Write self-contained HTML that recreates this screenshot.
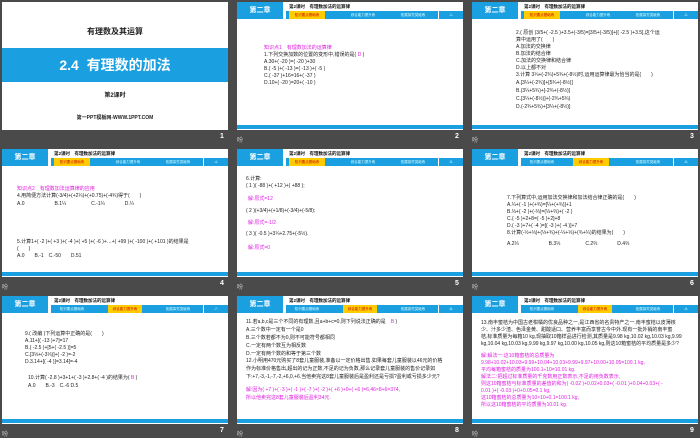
<!DOCTYPE html>
<html><head><meta charset="utf-8"><style>
*{margin:0;padding:0;box-sizing:border-box}
body{width:700px;height:438px;background:#4a4a4a;position:relative;overflow:hidden;font-family:"Liberation Sans","Noto Sans CJK SC",sans-serif;color:#222}
.s{position:absolute;width:226px;height:128px;background:#fff;overflow:hidden}
.hb{position:absolute;left:0;top:0;width:46px;height:17px;background:#1a9fe0;color:#fff;font-size:7px;font-weight:bold;text-align:center;line-height:17px}
.ht{position:absolute;left:52px;top:2px;font-size:4.5px;font-weight:bold;color:#111;white-space:nowrap}
.tb{position:absolute;left:49px;top:9px;width:177px;height:8px;background:#1a9fe0}
.tab{position:absolute;top:0;height:8px;font-size:3.5px;color:#dff;line-height:8px;text-align:center}
.y{background:#ffcc00;color:#c00}
.sep{position:absolute;top:0;width:1px;height:8px;background:#fff}
.bb{position:absolute;left:0;top:123px;width:226px;height:4px;background:#1a9fe0}
.t{position:absolute;font-size:5px;line-height:7px;white-space:nowrap;color:#222}
.m{color:#e020e0}
.n{position:absolute;color:#fff;font-size:7px;font-weight:bold}
.z{position:absolute;color:#ccc;font-size:6px}
</style></head><body>

<!-- slide 1 -->
<div class="s" style="left:2px;top:2px">
<div style="position:absolute;top:24px;width:100%;text-align:center;font-size:8px;font-weight:bold;color:#222">有理数及其运算</div>
<div style="position:absolute;top:46px;width:100%;height:34px;background:#1a9fe0;color:#fff;font-size:14px;font-weight:bold;text-align:center;line-height:34px">2.4&nbsp; 有理数的加法</div>
<div style="position:absolute;top:88px;width:100%;text-align:center;font-size:6px;font-weight:bold">第2课时</div>
<div style="position:absolute;top:112px;width:100%;text-align:center;font-size:5px;font-weight:bold">第一PPT模板网-WWW.1PPT.COM</div>
</div>

<!-- generic header -->
<div class="s" style="left:237px;top:2px">
<div class="hb">第二章</div><div class="ht">第2课时　有理数加法的运算律</div>
<div class="tb"><div class="tab y" style="left:3px;width:36px">知识要点基础练</div><div class="tab" style="left:52px;width:50px">综合能力提升练</div><div class="tab" style="left:102px;width:50px">拓展探究突破练</div><div class="sep" style="left:152px"></div><div class="tab" style="left:153px;width:24px">-1-</div></div>
<div class="t m" style="left:27px;top:43px">知识点1　有理数加法的运算律</div>
<div class="t" style="left:27px;top:50px">1.下列交换加数的位置的变形中,错误的是( <span class="m">D</span> )</div>
<div class="t" style="left:27px;top:57px">A.30+( -20 )=( -20 )+30</div>
<div class="t" style="left:27px;top:64px">B.( -5 )+( -13 )=( -13 )+( -5 )</div>
<div class="t" style="left:27px;top:71px">C.( -37 )+16=16+( -37 )</div>
<div class="t" style="left:27px;top:78px">D.10+( -20 )=20+( -10 )</div>
<div class="bb"></div></div>

<div class="s" style="left:472px;top:2px">
<div class="hb">第二章</div><div class="ht">第2课时　有理数加法的运算律</div>
<div class="tb"><div class="tab y" style="left:3px;width:36px">知识要点基础练</div><div class="tab" style="left:52px;width:50px">综合能力提升练</div><div class="tab" style="left:102px;width:50px">拓展探究突破练</div><div class="sep" style="left:152px"></div><div class="tab" style="left:153px;width:24px">-2-</div></div>
<div class="t" style="left:44px;top:28px">2.( 原创 )3/5+( -2.5 )+3.5+(-3/5)=[3/5+(-3/5)]+[( -2.5 )+3.5],这个运</div>
<div class="t" style="left:44px;top:35px">算中运用了(　　)</div>
<div class="t" style="left:44px;top:42px">A.加法的交换律</div>
<div class="t" style="left:44px;top:49px">B.加法的结合律</div>
<div class="t" style="left:44px;top:56px">C.加法的交换律和结合律</div>
<div class="t" style="left:44px;top:63px">D.以上都不对</div>
<div class="t" style="left:44px;top:70px">3.计算 3¼+(-2¾)+5¾+(-8½)时,运用运算律最为恰当的是(　　)</div>
<div class="t" style="left:44px;top:78px">A.[3¼+(-2¾)]+[5¾+(-8½)]</div>
<div class="t" style="left:44px;top:86px">B.(3¼+5¾)+[-2¾+(-8½)]</div>
<div class="t" style="left:44px;top:94px">C.[3¼+(-8½)]+(-2¾+5¾)</div>
<div class="t" style="left:44px;top:102px">D.(-2¾+5¾)+[3¼+(-8½)]</div>
<div class="bb"></div></div>

<!-- row 2 -->
<div class="s" style="left:2px;top:149px">
<div class="hb">第二章</div><div class="ht">第2课时　有理数加法的运算律</div>
<div class="tb"><div class="tab y" style="left:3px;width:36px">知识要点基础练</div><div class="tab" style="left:52px;width:50px">综合能力提升练</div><div class="tab" style="left:102px;width:50px">拓展探究突破练</div><div class="sep" style="left:152px"></div><div class="tab" style="left:153px;width:24px">-4-</div></div>
<div class="t m" style="left:15px;top:37px">知识点2　有理数加法运算律的应用</div>
<div class="t" style="left:15px;top:44px">4.用简便方法计算(-3/4)+(+2¼)+(+0.75)+(-4¾)得于(　　)</div>
<div class="t" style="left:15px;top:52px">A.0　　　　　　B.1¼　　　　　C.-1¼　　　　D.¼</div>
<div class="t" style="left:15px;top:90px">5.计算1+( -2 )+( +3 )+( -4 )+( +5 )+( -6 )+…+( +99 )+( -100 )+( +101 )的结果是</div>
<div class="t" style="left:15px;top:97px">(　　)</div>
<div class="t" style="left:15px;top:104px">A.0　　B.-1　C.-50　　D.51</div>
<div class="bb"></div></div>

<div class="s" style="left:237px;top:149px">
<div class="hb">第二章</div><div class="ht">第2课时　有理数加法的运算律</div>
<div class="tb"><div class="tab y" style="left:3px;width:36px">知识要点基础练</div><div class="tab" style="left:52px;width:50px">综合能力提升练</div><div class="tab" style="left:102px;width:50px">拓展探究突破练</div><div class="sep" style="left:152px"></div><div class="tab" style="left:153px;width:24px">-5-</div></div>
<div class="t" style="left:9px;top:27px">6.计算:</div>
<div class="t" style="left:9px;top:34px">( 1 )( -88 )+( +12 )+( +88 );</div>
<div class="t m" style="left:11px;top:47px">解:原式=12</div>
<div class="t" style="left:9px;top:59px">( 2 )(+3/4)+(+1/8)+(-3/4)+(-5/8);</div>
<div class="t m" style="left:11px;top:71px">解:原式=-1/2</div>
<div class="t" style="left:9px;top:82px">( 3 )( -0.5 )+3¼+2.75+(-5½).</div>
<div class="t m" style="left:11px;top:96px">解:原式=0</div>
<div class="bb"></div></div>

<div class="s" style="left:472px;top:149px">
<div class="hb">第二章</div><div class="ht">第2课时　有理数加法的运算律</div>
<div class="tb"><div class="tab" style="left:3px;width:36px">知识要点基础练</div><div class="tab y" style="left:52px;width:36px">综合能力提升练</div><div class="tab" style="left:102px;width:50px">拓展探究突破练</div><div class="sep" style="left:152px"></div><div class="tab" style="left:153px;width:24px">-6-</div></div>
<div class="t" style="left:35px;top:46px">7.下列算式中,运用加法交换律和加法结合律正确的是(　　)</div>
<div class="t" style="left:35px;top:53px">A.¼+( -1 )+(+¾)=[¼+(+¾)]+1</div>
<div class="t" style="left:35px;top:60px">B.⅓+( -2 )+(-⅔)=(⅓+⅔)+( -2 )</div>
<div class="t" style="left:35px;top:67px">C.( -5 )+2+8=( -5 )+2]+8</div>
<div class="t" style="left:35px;top:74px">D.( -3 )+7+( -4 )=[( -3 )+( -4 )]+7</div>
<div class="t" style="left:35px;top:81px">8.计算(-½+⅓)+(⅓+¾)+(-¼+⅓)+(¾+¼)的结果为(　　)</div>
<div class="t" style="left:35px;top:92px">A.2⅓　　　　　　B.3⅓　　　　　C.2⅔　　　　D.4⅔</div>
<div class="bb"></div></div>

<!-- row 3 -->
<div class="s" style="left:2px;top:296px">
<div class="hb">第二章</div><div class="ht">第2课时　有理数加法的运算律</div>
<div class="tb"><div class="tab" style="left:3px;width:36px">知识要点基础练</div><div class="tab y" style="left:57px;width:34px">综合能力提升练</div><div class="tab" style="left:102px;width:50px">拓展探究突破练</div><div class="sep" style="left:152px"></div><div class="tab" style="left:153px;width:24px">-7-</div></div>
<div class="t" style="left:23px;top:35px">9.( 改编 )下列运算中正确的是(　　)</div>
<div class="t" style="left:23px;top:42px">A.11+[( -13 )+7]=17</div>
<div class="t" style="left:23px;top:49px">B.( -2.5 )+[5+( -2.5 )]=5</div>
<div class="t" style="left:23px;top:56px">C.[3⅓+(-3⅓)]+( -2 )=-2</div>
<div class="t" style="left:23px;top:63px">D.3.14+[( -4 )]=3.14]=-4</div>
<div class="t" style="left:26px;top:79px">10.计算( -2.8 )+3+1+( -3 )+2.8+( -4 )的结果为( <span class="m">B</span> )</div>
<div class="t" style="left:26px;top:87px">A.0　　B.-3　C.-6 D.5</div>
<div class="bb"></div></div>

<div class="s" style="left:237px;top:296px">
<div class="hb">第二章</div><div class="ht">第2课时　有理数加法的运算律</div>
<div class="tb"><div class="tab" style="left:3px;width:36px">知识要点基础练</div><div class="tab y" style="left:57px;width:34px">综合能力提升练</div><div class="tab" style="left:102px;width:50px">拓展探究突破练</div><div class="sep" style="left:152px"></div><div class="tab" style="left:153px;width:24px">-8-</div></div>
<div class="t" style="left:9px;top:23px">11.若a,b,c是三个不同的有理数,且a+b+c=0,则下列说法正确的是　<span class="m">B</span> )</div>
<div class="t" style="left:9px;top:31px">A.三个数中一定有一个是0</div>
<div class="t" style="left:9px;top:39px">B.三个数若都不为0,则不可能符号都相同</div>
<div class="t" style="left:9px;top:47px">C.一定有两个数互为相反数</div>
<div class="t" style="left:9px;top:55px">D.一定有两个数的和等于第三个数</div>
<div class="t" style="left:9px;top:62px">12.小明用470元购买了8套儿童服装,准备以一定价格出售.如果每套儿童服装以46元的价格</div>
<div class="t" style="left:9px;top:70px">作为标准价格售出,超出的记为正数,不足的记为负数,那么记录套儿童服装的售价记录如</div>
<div class="t" style="left:9px;top:78px">下:+7,-3,-1,-7,-2,+6,0,+6.当他卖完这8套儿童服装后是盈利还是亏损?盈利或亏损多少元?</div>
<div class="t m" style="left:9px;top:91px">解:因为( +7 )+( -3 )+( -1 )+( -7 )+( -2 )+( +6 )+0+( +6 )=6,46×8+6=374,</div>
<div class="t m" style="left:9px;top:99px">所以他卖完这8套儿童服装后盈利34元.</div>
<div class="bb"></div></div>

<div class="s" style="left:472px;top:296px">
<div class="hb">第二章</div><div class="ht">第2课时　有理数加法的运算律</div>
<div class="tb"><div class="tab" style="left:3px;width:36px">知识要点基础练</div><div class="tab y" style="left:57px;width:34px">综合能力提升练</div><div class="tab" style="left:102px;width:50px">拓展探究突破练</div><div class="sep" style="left:152px"></div><div class="tab" style="left:153px;width:24px">-9-</div></div>
<div class="t" style="left:9px;top:24px">13.南丰蜜桔为中国古老柑橘的优良品种之一,是江西省的名贵特产之一.南丰蜜桔以皮薄核</div>
<div class="t" style="left:9px;top:31px">少、汁多少渣、色泽金黄、甜酸适口、营养丰富而享誉古今中外.现有一批外销的南丰蜜</div>
<div class="t" style="left:9px;top:38px">桔,标准质量为每箱10 kg,现抽取10箱样品进行检测,其质量是9.98 kg,10.02 kg,10.03 kg,9.99</div>
<div class="t" style="left:9px;top:45px">kg,10.04 kg,10.03 kg,9.99 kg,9.97 kg,10.00 kg,10.05 kg,则这10箱蜜桔的平均质量是多少?</div>
<div class="t m" style="left:9px;top:57px">解:解法一:这10箱蜜桔的总质量为</div>
<div class="t m" style="left:9px;top:64px">9.98+10.02+10.03+9.99+10.04+10.03+9.99+9.97+10.00+10.05=100.1 kg,</div>
<div class="t m" style="left:9px;top:71px">平均每箱蜜桔的质量为100.1÷10=10.01 kg.</div>
<div class="t m" style="left:9px;top:78px">解法二:把超过标准质量的千克数用正数表示,不足的用负数表示,</div>
<div class="t m" style="left:9px;top:85px">则这10箱蜜桔与标准质量的差值的和为( -0.02 )+0.02+0.03+( -0.01 )+0.04+0.03+( -</div>
<div class="t m" style="left:9px;top:92px">0.01 )+( -0.03 )+0+0.05=0.1 kg,</div>
<div class="t m" style="left:9px;top:99px">这10箱蜜桔的总质量为10×10+0.1=100.1 kg,</div>
<div class="t m" style="left:9px;top:106px">所以这10箱蜜桔的平均质量为10.01 kg.</div>
<div class="bb"></div></div>

<div class="n" style="left:220px;top:133px">1</div><div class="z" style="left:237px;top:135px">吩</div>
<div class="n" style="left:455px;top:133px">2</div><div class="z" style="left:472px;top:135px">吩</div>
<div class="n" style="left:690px;top:133px">3</div>
<div class="z" style="left:2px;top:282px">吩</div><div class="n" style="left:220px;top:280px">4</div>
<div class="z" style="left:237px;top:282px">吩</div><div class="n" style="left:455px;top:280px">5</div>
<div class="z" style="left:472px;top:282px">吩</div><div class="n" style="left:690px;top:280px">6</div>
<div class="z" style="left:2px;top:429px">吩</div><div class="n" style="left:220px;top:427px">7</div>
<div class="z" style="left:237px;top:429px">吩</div><div class="n" style="left:455px;top:427px">8</div>
<div class="z" style="left:472px;top:429px">吩</div><div class="n" style="left:690px;top:427px">9</div>
</body></html>
